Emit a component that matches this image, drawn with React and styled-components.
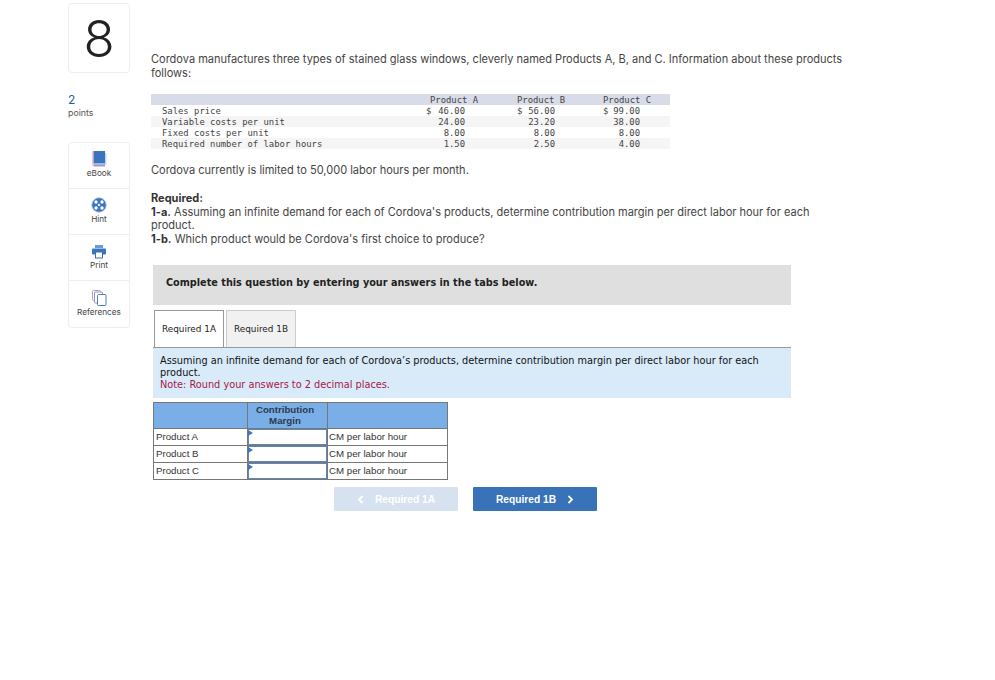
import React from "react";
import styled, { createGlobalStyle } from "styled-components";

const GlobalStyle = createGlobalStyle`
  html, body {
    margin: 0;
    padding: 0;
    background: #fff;
    font-family: Inter, "Open Sans", sans-serif;
  }
`;

const Page = styled.div`
  display: flex;
  align-items: flex-start;
  gap: 21px;
  padding: 3px 0 0 68px;
  height: 677px;
`;

const Sidebar = styled.aside`
  width: 62px;
  flex: none;
`;

const NumberBox = styled.div`
  height: 68px;
  border: 1px solid #eee;
  border-radius: 4px;
  display: flex;
  align-items: center;
  justify-content: center;
  font-weight: 300;
  font-size: 51px;
  color: #222;
`;

const Points = styled.div`
  margin-top: 20px;
  color: #1a5f9e;
  font-size: 12px;
  line-height: 14px;
  span {
    display: block;
    color: #555;
    font-size: 8.8px;
    line-height: 12px;
  }
`;

const Tools = styled.div`
  margin-top: 23px;
  border: 1px solid #eee;
  border-radius: 4px;
`;

const Tool = styled.div`
  height: 46px;
  display: flex;
  flex-direction: column;
  align-items: center;
  justify-content: flex-end;
  padding-bottom: 9px;
  box-sizing: border-box;
  border-bottom: 1px solid #eee;
  font-size: 8.2px;
  line-height: 11px;
  color: #444;
  gap: 1px;
  &:last-child {
    border-bottom: 0;
  }
`;

const Content = styled.main`
  width: 700px;
  padding-top: 50px;
  color: #444;
`;

const Para = styled.p`
  margin: ${(p) => p.$margin || "0"};
  font-size: 11.03px;
  line-height: 13.6px;
  b {
    font-weight: 700;
    color: #333;
  }
`;

const DataTable = styled.div`
  margin-top: 13.8px;
  width: 519px;
  font-family: "DejaVu Sans Mono", monospace;
  font-size: 8.9px;
  line-height: 11px;
  color: #444;
`;

const DataRow = styled.div`
  display: grid;
  grid-template-columns: 275px 91px 86px 67px;
  height: 11px;
  box-sizing: border-box;
  padding-top: 1px;
  background: ${(p) => (p.$head ? "#d8dce8" : p.$alt ? "#f5f5f5" : "#fff")};
`;

const DataLabel = styled.div`
  padding-left: 11px;
`;

const HeadCell = styled.div`
  padding-left: ${(p) => p.$inset || 0}px;
`;

const ValueCell = styled.div`
  width: ${(p) => p.$width}px;
  display: flex;
  justify-content: space-between;
`;

const Banner = styled.div`
  margin: 18.4px 0 0 2px;
  width: 638px;
  height: 40px;
  background: #dfdfdf;
  display: flex;
  align-items: center;
  padding: 0 0 4px 13px;
  box-sizing: border-box;
  font-family: "DejaVu Sans", sans-serif;
  font-weight: 700;
  font-size: 9.7px;
  color: #222;
`;

const Tabs = styled.div`
  display: flex;
  gap: 2px;
  margin: 5px 0 0 3px;
  height: 37px;
`;

const Tab = styled.div`
  width: 70px;
  box-sizing: border-box;
  border: 1px solid ${(p) => (p.$active ? "#999" : "#ccc")};
  border-bottom: 0;
  background: ${(p) => (p.$active ? "#fff" : "#f1f1f1")};
  display: flex;
  align-items: center;
  justify-content: center;
  font-family: "DejaVu Sans", sans-serif;
  font-size: 8.9px;
  color: #222;
`;

const InfoPanel = styled.div`
  margin-left: 2px;
  width: 638px;
  height: 51px;
  box-sizing: border-box;
  background: #d9ebf9;
  border-top: 1px solid #999;
  padding: 7px 7px 0;
  font-family: "DejaVu Sans", sans-serif;
  font-size: 9.76px;
  line-height: 12px;
  color: #111;
`;

const Note = styled.span`
  color: #a5174b;
  display: block;
`;

const AnswerTable = styled.div`
  margin: 4px 0 0 2px;
  width: 295px;
  display: grid;
  grid-template-columns: 93px 80px 120px;
  grid-template-rows: 25px 17px 17px 17px;
  box-sizing: border-box;
  border: 1px solid #777;
  font-family: "Liberation Sans", sans-serif;
  font-size: 9.7px;
  color: #333;
`;

const HeadBox = styled.div`
  background: #7aaee6;
  border-left: ${(p) => (p.$first ? "0" : "1px solid #777")};
  text-align: center;
  font-weight: 700;
  line-height: 11px;
  padding: 1px 5px 0 0;
  color: #2b3a4d;
`;

const TextBox = styled.div`
  border-top: 1px solid #777;
  border-left: ${(p) => (p.$first ? "0" : "1px solid #777")};
  padding-left: ${(p) => (p.$first ? 2 : 1)}px;
  display: flex;
  align-items: center;
`;

const InputBox = styled.div`
  position: relative;
  border-top: 1px solid #777;
  border-left: 1px solid #777;
  background: #fff;
  box-shadow: inset 0 0 0 1px #5f87b5;
  &::before {
    content: "";
    position: absolute;
    top: 1px;
    left: 0;
    border-left: 5px solid #3a78c0;
    border-top: 3px solid transparent;
    border-bottom: 3px solid transparent;
  }
`;

const Actions = styled.div`
  display: flex;
  gap: 15px;
  margin: 7px 0 0 183px;
`;

const NavButton = styled.div`
  width: 124px;
  height: 24px;
  box-sizing: border-box;
  padding-top: 1px;
  border-radius: 1px;
  background: ${(p) => (p.$muted ? "#d7e2f0" : "#3872b8")};
  color: #fff;
  display: flex;
  align-items: center;
  justify-content: center;
  gap: 11px;
  font-family: "Liberation Sans", sans-serif;
  font-weight: 700;
  font-size: 10.2px;
`;

const products = [
  ["Sales price", "$", "46.00", "$", "56.00", "$", "99.00"],
  ["Variable costs per unit", "", "24.00", "", "23.20", "", "38.00"],
  ["Fixed costs per unit", "", "8.00", "", "8.00", "", "8.00"],
  ["Required number of labor hours", "", "1.50", "", "2.50", "", "4.00"],
];

const BookIcon = () => (
  <svg width="15" height="17" viewBox="0 0 15 17">
    <rect x="1.5" y="1" width="11.5" height="12.5" fill="#3b74bd" />
    <path d="M1 1v14q0 1 1 1h11" fill="none" stroke="#d48fb0" strokeWidth="1" />
    <path d="M2 15h11" stroke="#3b74bd" strokeWidth="1" />
    <path d="M13.8 3v12" stroke="#a9c8ea" strokeWidth="1" />
  </svg>
);

const HintIcon = () => (
  <svg width="16" height="16" viewBox="0 0 16 16">
    <circle cx="8" cy="8" r="7.2" fill="#3b74bd" stroke="#a6bfe4" strokeWidth="0.8" />
    <circle cx="5" cy="5" r="1.7" fill="#fff" />
    <circle cx="11" cy="5" r="1.7" fill="#fff" />
    <circle cx="5" cy="11" r="1.7" fill="#fff" />
    <circle cx="11" cy="11" r="1.7" fill="#fff" />
    <circle cx="8" cy="8" r="1.3" fill="#dfe9f6" />
  </svg>
);

const PrintIcon = () => (
  <svg width="16" height="15" viewBox="0 0 16 15">
    <rect x="4" y="1" width="8" height="3" fill="#6a9bd6" />
    <rect x="1" y="4.5" width="14" height="6" rx="1" fill="#3b74bd" />
    <rect x="4.5" y="8" width="7" height="6" fill="#fff" stroke="#3f6ea8" />
  </svg>
);

const RefIcon = () => (
  <svg width="15" height="16" viewBox="0 0 15 16" fill="#fff">
    <rect x="0.5" y="0.5" width="8" height="10" rx="1" stroke="#b49ccb" />
    <rect x="2.5" y="2" width="8" height="11" rx="1" stroke="#8f94c8" />
    <rect x="5.5" y="4.5" width="8.5" height="11" rx="1" stroke="#4d7fb8" />
  </svg>
);

const Chevron = ({ left }) => (
  <svg width="7" height="9" viewBox="0 0 7 9">
    <path d={left ? "M5.5 1L2 4.5 5.5 8" : "M1.5 1L5 4.5 1.5 8"} fill="none" stroke="#fff" strokeWidth="1.8" />
  </svg>
);

export default function App() {
  return (
    <>
      <GlobalStyle />
      <Page>
        <Sidebar>
          <NumberBox>8</NumberBox>
          <Points>
            2<span>points</span>
          </Points>
          <Tools>
            <Tool><BookIcon />eBook</Tool>
            <Tool><HintIcon />Hint</Tool>
            <Tool><PrintIcon />Print</Tool>
            <Tool><RefIcon />References</Tool>
          </Tools>
        </Sidebar>
        <Content>
          <Para>
            Cordova manufactures three types of stained glass windows, cleverly named Products A, B, and C. Information about these products follows:
          </Para>
          <DataTable>
            <DataRow $head>
              <div />
              <HeadCell $inset={4}>Product A</HeadCell>
              <HeadCell>Product B</HeadCell>
              <HeadCell>Product C</HeadCell>
            </DataRow>
            {products.map((row, i) => (
              <DataRow key={row[0]} $alt={i % 2 === 1}>
                <DataLabel>{row[0]}</DataLabel>
                <ValueCell $width={39}><span>{row[1]}</span><span>{row[2]}</span></ValueCell>
                <ValueCell $width={38}><span>{row[3]}</span><span>{row[4]}</span></ValueCell>
                <ValueCell $width={37}><span>{row[5]}</span><span>{row[6]}</span></ValueCell>
              </DataRow>
            ))}
          </DataTable>
          <Para $margin="15px 0 0">Cordova currently is limited to 50,000 labor hours per month.</Para>
          <Para $margin="14.6px 0 0">
            <b>Required:</b>
            <br />
            <b>1-a.</b> Assuming an infinite demand for each of Cordova's products, determine contribution margin per direct labor hour for each product.
            <br />
            <b>1-b.</b> Which product would be Cordova's first choice to produce?
          </Para>
          <Banner>Complete this question by entering your answers in the tabs below.</Banner>
          <Tabs>
            <Tab $active>Required 1A</Tab>
            <Tab>Required 1B</Tab>
          </Tabs>
          <InfoPanel>
            Assuming an infinite demand for each of Cordova’s products, determine contribution margin per direct labor hour for each product.
            <Note>Note: Round your answers to 2 decimal places.</Note>
          </InfoPanel>
          <AnswerTable>
            <HeadBox $first />
            <HeadBox>Contribution<br />Margin</HeadBox>
            <HeadBox />
            {["Product A", "Product B", "Product C"].map((name) => (
              <React.Fragment key={name}>
                <TextBox $first>{name}</TextBox>
                <InputBox />
                <TextBox>CM per labor hour</TextBox>
              </React.Fragment>
            ))}
          </AnswerTable>
          <Actions>
            <NavButton $muted><Chevron left />Required 1A</NavButton>
            <NavButton>Required 1B<Chevron /></NavButton>
          </Actions>
        </Content>
      </Page>
    </>
  );
}
